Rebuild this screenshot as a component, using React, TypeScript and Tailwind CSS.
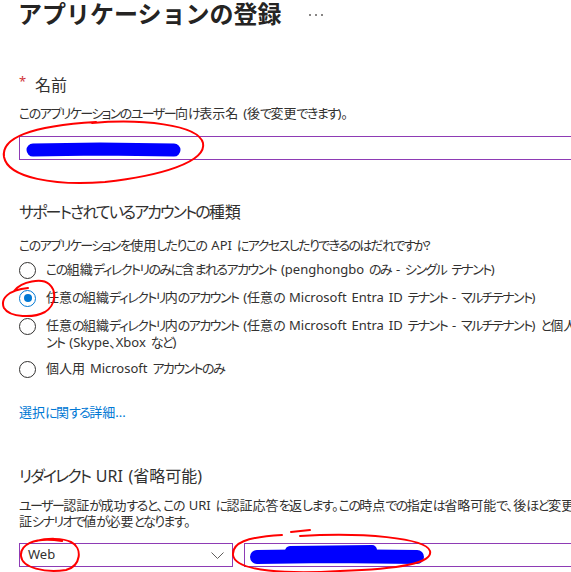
import React from 'react';

const FONT = "font-['Noto_Sans','Noto_Sans_CJK_JP',sans-serif] [font-feature-settings:'palt'] [word-spacing:1.5px]";

// the reference uses a narrow-kana UI font, so kana runs get tightened
const J: React.FC<{ t: string }> = ({ t }) => (
  <>
    {t.split(/([\u3041-\u30ff]+)/).map((s, i) => {
      if (!s) return null;
      if (/^[\u3041-\u30ff]+$/.test(s)) return <span key={i} className="tracking-[-0.12em]">{s}</span>;
      return <span key={i}>{s}</span>;
    })}
  </>
);

const Radio: React.FC<{ checked?: boolean; lines: string[] }> = ({ checked, lines }) => {
  return (
    <div className="flex items-start gap-[10px]">
      <span className="w-[17px] h-[20px] flex items-center justify-center shrink-0">
        <span
          className={
            checked
              ? 'w-[17px] h-[17px] rounded-full border border-[#0078d4] flex items-center justify-center'
              : 'w-[17px] h-[17px] rounded-full border border-[#323130]'
          }
        >
          {checked && <span className="w-[8px] h-[8px] rounded-full bg-[#0078d4]" />}
        </span>
      </span>
      <div className="text-[13px] leading-[17px] pt-[1px] whitespace-nowrap">
        {lines.map((l, i) => (
          <div key={i}>
            <J t={l} />
          </div>
        ))}
      </div>
    </div>
  );
};

// hand-drawn red circles and blue redactions on top of the form
const Marks: React.FC = () => (
  <svg className="absolute inset-0 pointer-events-none" width="571" height="572" viewBox="0 0 571 572">
    <g fill="none" stroke="#0000ff" strokeLinecap="round" strokeLinejoin="round">
      <path d="M33 150 L100 149 L174 150" strokeWidth="13" />
      <path d="M257 557 L330 556 L417 557" strokeWidth="14" />
      <path d="M290 551 L372 550" strokeWidth="10" />
    </g>
    <g fill="none" stroke="#ff0000" strokeWidth="2" strokeLinecap="round">
      <path d="M92 123 C140 119 198 124 203 143 C207 162 160 176 105 182 C55 186 8 178 4 157 C1 138 30 126 96 122" />
      <path d="M14 291 C22 281 42 278 49 284 C57 291 56 305 45 312 C34 318 10 318 4 308 C0 299 8 290 28 288" />
      <path d="M62 541 C32 536 20 546 21 556 C22 568 45 573 66 570 C81 566 83 548 71 542 C63 538 47 538 36 541" />
      <path d="M300 536 C362 532 426 538 430 551 C433 563 400 569 340 571 C290 574 235 572 233 555 C232 543 246 537 282 535" />
      <path d="M291 532 L310 530" />
    </g>
  </svg>
);

export default function App() {
  return (
    <div className={`relative w-[571px] h-[572px] overflow-hidden bg-white text-[#323130] ${FONT}`}>
      <div className="w-[760px] pl-[19px]">
        <div className="flex items-center h-[28px]">
          <h1 className="text-[24px] leading-[28px] font-bold text-[#252423] -ml-[1px] [font-feature-settings:normal]">
            アプリケーションの登録
          </h1>
          <div className="flex items-center gap-[4px] ml-[27px] mt-[1px]">
            <span className="w-[2px] h-[2px] rounded-full bg-[#605e5c]" />
            <span className="w-[2px] h-[2px] rounded-full bg-[#605e5c]" />
            <span className="w-[2px] h-[2px] rounded-full bg-[#605e5c]" />
          </div>
        </div>

        <div className="mt-[46px] flex items-start h-[22px]">
          <span className="text-[#d13438] text-[13px] leading-[14px] w-[16px]">*</span>
          <span className="text-[16px] leading-[22px]">名前</span>
        </div>
        <p className="mt-[8px] text-[13px] leading-[18px] whitespace-nowrap">
          <J t="このアプリケーションのユーザー向け表示名 (後で変更できます)。" />
        </p>
        <div className="mt-[14px] w-[620px] h-[24px] border border-[#8e3bb5]" />

        <h2 className="mt-[41px] text-[16px] leading-[22px] whitespace-nowrap">
          <J t="サポートされているアカウントの種類" />
        </h2>
        <p className="mt-[13px] text-[13px] leading-[18px] whitespace-nowrap">
          <J t="このアプリケーションを使用したりこの API にアクセスしたりできるのはだれですか?" />
        </p>
        <div className="mt-[6px] flex flex-col gap-[8px]">
          <Radio lines={['この組織ディレクトリのみに含まれるアカウント (penghongbo のみ - シングル テナント)']} />
          <Radio checked lines={['任意の組織ディレクトリ内のアカウント (任意の Microsoft Entra ID テナント - マルチテナント)']} />
          <Radio
            lines={[
              '任意の組織ディレクトリ内のアカウント (任意の Microsoft Entra ID テナント - マルチテナント) と個人用 Microsoft アカウ',
              'ント (Skype、Xbox など)',
            ]}
          />
          <Radio lines={['個人用 Microsoft アカウントのみ']} />
        </div>

        <a className="block mt-[24px] text-[13px] leading-[18px] text-[#0078d4]">
          <J t="選択に関する詳細..." />
        </a>

        <h2 className="mt-[44px] text-[16px] leading-[22px] whitespace-nowrap">
          <J t="リダイレクト URI (省略可能)" />
        </h2>
        <div className="mt-[10px] text-[13px] leading-[16px] whitespace-nowrap">
          <div>
            <J t="ユーザー認証が成功すると、この URI に認証応答を返します。この時点での指定は省略可能で、後ほど変更できますが、ほとんどの認" />
          </div>
          <div>
            <J t="証シナリオで値が必要となります。" />
          </div>
        </div>
        <div className="mt-[14px] flex gap-[11px]">
          <div className="w-[214px] h-[24px] border border-[#8e3bb5] flex items-center justify-between pl-[8px] pr-[8px]">
            <span className="text-[13px]">Web</span>
            <svg width="13" height="7" viewBox="0 0 13 7" fill="none" stroke="#605e5c" strokeWidth="1">
              <path d="M0.5 0.5 L6.5 6.5 L12.5 0.5" />
            </svg>
          </div>
          <div className="w-[420px] h-[24px] border border-[#8e3bb5]" />
        </div>
      </div>
      <Marks />
    </div>
  );
}
